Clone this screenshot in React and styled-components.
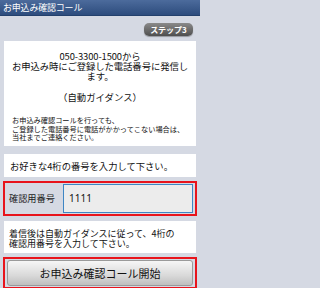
import React, { useState } from "react";
import styled, { createGlobalStyle } from "styled-components";

const GlobalStyle = createGlobalStyle`
  html, body {
    margin: 0;
    padding: 0;
    background: #d5d9e3;
  }
  body {
    font-family: "Noto Sans CJK JP", "Noto Sans", sans-serif;
  }
`;

function App() {
  const [code, setCode] = useState("1111");

  return (
    <Page>
      <GlobalStyle />
      <Header>お申込み確認コール</Header>

      <StepRow>
        <StepBadge>ステップ3</StepBadge>
      </StepRow>

      <Card $pad="10px 4px 4px">
        <Lead>
          050-3300-1500から
          <br />
          お申込み時にご登録した電話番号に発信し
          <br />
          ます。
        </Lead>
        <Guidance>（自動ガイダンス）</Guidance>
        <Note>
          お申込み確認コールを行っても、
          <br />
          ご登録した電話番号に電話がかかってこない場合は、
          <br />
          当社までご連絡ください。
        </Note>
      </Card>

      <Card $pad="6px 6px 5px" $gap="8px">
        <Prompt>お好きな4桁の番号を入力して下さい。</Prompt>
      </Card>

      <Highlight $gap="4px">
        <InputRow>
          <FieldLabel>確認用番号</FieldLabel>
          <CodeInput
            value={code}
            onChange={(e) => setCode(e.target.value)}
            maxLength={4}
          />
        </InputRow>
      </Highlight>

      <Card $pad="8px 5px 4px" $gap="5px">
        <Hint>
          着信後は自動ガイダンスに従って、4桁の
          <br />
          確認用番号を入力して下さい。
        </Hint>
      </Card>

      <Highlight $gap="4px">
        <StartButton>お申込み確認コール開始</StartButton>
      </Highlight>
    </Page>
  );
}

const Page = styled.div`
  width: 200px;
  height: 288px;
  overflow: hidden;
  background: #d5d9e3;
`;

const Header = styled.div`
  height: 16px;
  line-height: 16px;
  padding-left: 3px;
  font-size: 9px;
  color: #fff;
  background: linear-gradient(#4c6b9c, #2d4c7d);
  border-bottom: 1px solid #23406c;
  box-sizing: border-box;
  letter-spacing: -0.2px;
`;

const StepRow = styled.div`
  display: flex;
  justify-content: flex-end;
  padding: 7px 7px 0;
`;

const StepBadge = styled.div`
  width: 49px;
  height: 13px;
  border-radius: 5px;
  background: linear-gradient(#8a8a8a, #4f4f4f);
  color: #fff;
  font-size: 8px;
  font-weight: bold;
  line-height: 13px;
  text-align: center;
  box-shadow: 0 1px 1px rgba(0, 0, 0, 0.3);
`;

const Card = styled.div`
  margin: ${(p) => p.$gap || "5px"} 4px 0;
  padding: ${(p) => p.$pad};
  background: #fff;
  color: #111;
`;

const Lead = styled.div`
  font-size: 9.4px;
  line-height: 10px;
  text-align: center;
  white-space: nowrap;
  letter-spacing: -0.1px;
`;

const Guidance = styled.div`
  margin-top: 11px;
  font-size: 9.4px;
  line-height: 10px;
  text-align: center;
`;

const Note = styled.div`
  margin-top: 14px;
  padding-left: 4px;
  font-size: 7.2px;
  line-height: 8.5px;
  white-space: nowrap;
`;

const Prompt = styled.div`
  font-size: 9.3px;
  line-height: 12px;
  white-space: nowrap;
`;

const Hint = styled.div`
  font-size: 9px;
  line-height: 10px;
  white-space: nowrap;
`;

const Highlight = styled.div`
  margin: ${(p) => p.$gap} 3px 0;
  border: 2px solid #e8141c;
  padding: 1px 2px;
`;

const InputRow = styled.div`
  display: flex;
  align-items: center;
  gap: 4px;
`;

const FieldLabel = styled.div`
  width: 50px;
  padding-left: 2px;
  font-size: 9.2px;
  color: #222;
  white-space: nowrap;
`;

const CodeInput = styled.input`
  flex: 1;
  height: 29px;
  box-sizing: border-box;
  border: 1.5px solid #3e86c4;
  background: #ececec;
  padding: 0 5px;
  font-family: "Noto Sans", sans-serif;
  font-size: 10px;
  color: #111;
  outline: none;
  min-width: 0;
`;

const StartButton = styled.button`
  display: block;
  width: 100%;
  height: 26px;
  border: 1px solid #9a9a9a;
  border-radius: 3px;
  background: linear-gradient(#f6f6f6, #d9d9d9 60%, #bfbfbf);
  font-family: "Noto Sans CJK JP", sans-serif;
  font-size: 11px;
  color: #111;
  padding: 0;
  cursor: pointer;
`;

export default App;
